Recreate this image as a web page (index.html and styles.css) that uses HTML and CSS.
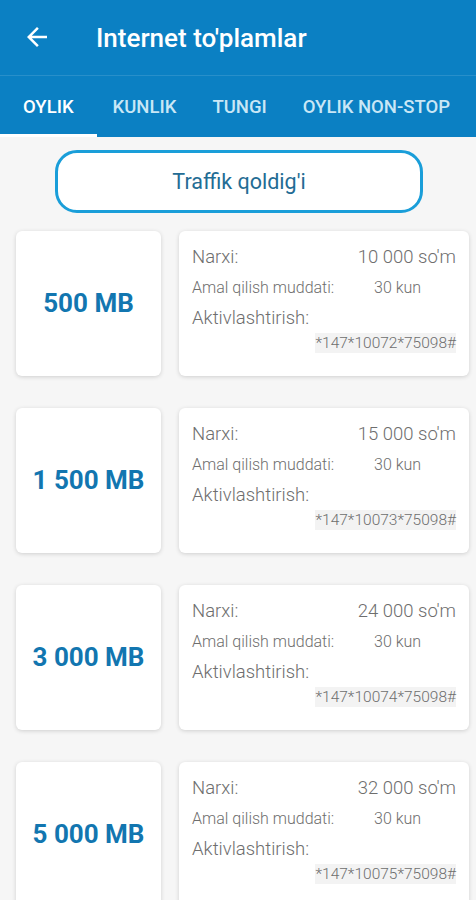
FILE: index.html
```html
<!DOCTYPE html>
<html lang="uz">
<head>
  <meta charset="UTF-8">
  <meta name="viewport" content="width=device-width, initial-scale=1.0">
  <title>Internet to'plamlar</title>
  <link rel="stylesheet" href="styles.css">
</head>
<body>
  <header class="appbar">
    <svg class="back" width="30" height="30" viewBox="0 0 24 24">
      <path d="M20 11H7.83l5.59-5.59L12 4l-8 8 8 8 1.41-1.41L7.83 13H20v-2z" fill="#fff"/>
    </svg>
    <h1>Internet to'plamlar</h1>
  </header>

  <!-- Tabs -->
  <nav class="tabs">
    <div class="tab active">OYLIK</div>
    <div class="tab">KUNLIK</div>
    <div class="tab">TUNGI</div>
    <div class="tab">OYLIK NON-STOP</div>
  </nav>

  <main class="content">
    <button class="traffic">Traffik qoldig'i</button>

    <div class="packs">
      <div class="pack">
        <div class="card size">500 MB</div>
        <div class="card info">
          <div class="row"><span>Narxi:</span><span>10 000 so'm</span></div>
          <div class="row small"><span class="label">Amal qilish muddati:</span><span>30 kun</span></div>
          <div class="row"><span>Aktivlashtirish:</span></div>
          <div class="code"><span>*147*10072*75098#</span></div>
        </div>
      </div>

      <div class="pack">
        <div class="card size">1 500 MB</div>
        <div class="card info">
          <div class="row"><span>Narxi:</span><span>15 000 so'm</span></div>
          <div class="row small"><span class="label">Amal qilish muddati:</span><span>30 kun</span></div>
          <div class="row"><span>Aktivlashtirish:</span></div>
          <div class="code"><span>*147*10073*75098#</span></div>
        </div>
      </div>

      <div class="pack">
        <div class="card size">3 000 MB</div>
        <div class="card info">
          <div class="row"><span>Narxi:</span><span>24 000 so'm</span></div>
          <div class="row small"><span class="label">Amal qilish muddati:</span><span>30 kun</span></div>
          <div class="row"><span>Aktivlashtirish:</span></div>
          <div class="code"><span>*147*10074*75098#</span></div>
        </div>
      </div>

      <div class="pack">
        <div class="card size">5 000 MB</div>
        <div class="card info">
          <div class="row"><span>Narxi:</span><span>32 000 so'm</span></div>
          <div class="row small"><span class="label">Amal qilish muddati:</span><span>30 kun</span></div>
          <div class="row"><span>Aktivlashtirish:</span></div>
          <div class="code"><span>*147*10075*75098#</span></div>
        </div>
      </div>
    </div>
  </main>
</body>
</html>
```

FILE: styles.css
```css
body {
    margin: 0;
    font-family: Roboto, "Liberation Sans", sans-serif;
    background-color: #f6f6f6;
    overflow: hidden;
  }

  .appbar {
    height: 76px;
    background-color: #0b80c3;
    display: flex;
    align-items: center;
    padding-left: 22px;
    box-sizing: border-box;
  }

  .appbar .back {
    width: 30px;
    height: 30px;
    margin-top: -2px;
  }

  .appbar h1 {
    margin: 0 0 0 44px;
    font-size: 26px;
    font-weight: 500;
    color: #fff;
  }

  .tabs {
    height: 61px;
    background-color: #0b80c3;
    display: flex;
    box-shadow: 0 -1px 0 rgba(255, 255, 255, 0.12);
  }

  .tab {
    display: flex;
    align-items: center;
    padding: 3px 18px 0;
    font-size: 18.5px;
    font-weight: 500;
    color: #c9e7f6;
    border-bottom: 3px solid transparent;
  }

  .tab:nth-child(2) {
    padding-left: 16px;
  }

  .tab.active {
    padding: 3px 23px 0;
    color: #fff;
    border-bottom-color: #fff;
  }

  .content {
    padding: 13px 7px 0 16px;
  }

  .traffic {
    display: block;
    width: 368px;
    height: 63px;
    margin: 0 0 0 39px;
    background-color: #fff;
    border: 3px solid #1a9ed9;
    border-radius: 22px;
    font-family: Roboto, "Liberation Sans", sans-serif;
    font-size: 21.5px;
    color: #236c94;
  }

  .packs {
    margin-top: 18px;
    display: flex;
    flex-direction: column;
    gap: 32px;
  }

  .pack {
    display: grid;
    grid-template-columns: 145px 290px;
    gap: 18px;
    height: 145px;
  }

  .card {
    background-color: #fff;
    border-radius: 6px;
    box-shadow: 0 1px 4px rgba(0, 0, 0, 0.16);
  }

  .size {
    display: flex;
    align-items: center;
    justify-content: center;
    font-size: 26px;
    font-weight: 700;
    color: #1276b0;
    padding-bottom: 2px;
    box-sizing: border-box;
  }

  .info {
    padding: 14px 13px 0 13px;
    color: #6e6e6e;
    font-weight: 300;
  }

  .row {
    display: flex;
    justify-content: space-between;
    font-size: 18.5px;
    line-height: 24px;
  }

  .row.small {
    justify-content: flex-start;
    font-size: 16px;
    line-height: 22px;
    margin: 8px 0 7px;
  }

  .row.small .label {
    width: 182px;
  }

  .code {
    margin-top: 1px;
    text-align: right;
    font-size: 15.5px;
    line-height: 25px;
  }

  .code span {
    background-color: #f3f3f3;
    padding: 1px 0;
  }
```
